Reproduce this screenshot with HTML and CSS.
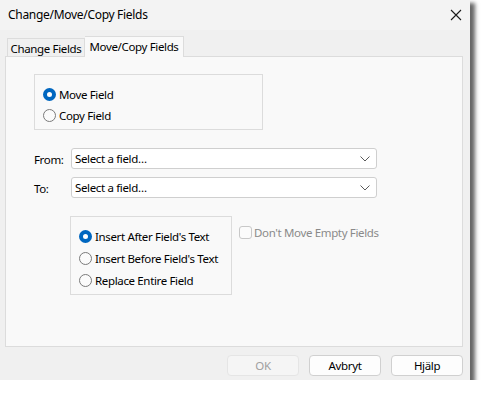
FILE: index.html
```html
<!DOCTYPE html>
<html>
<head>
<meta charset="utf-8">
<link rel="stylesheet" href="styles.css">
</head>
<body>
<div class="window">
  <div class="titlebar">
    <span class="title">Change/Move/Copy Fields</span>
    <svg class="close" width="12" height="12" viewBox="0 0 12 12"><path d="M1 1L11 11M11 1L1 11" stroke="#1a1a1a" stroke-width="1.1" fill="none"/></svg>
  </div>
  <div class="body">
    <div class="tabs">
      <div class="tab">Change Fields</div>
      <div class="tab active">Move/Copy Fields</div>
    </div>
    <div class="panel">
      <div class="group mode">
        <div class="opt"><span class="radio on"></span>Move Field</div>
        <div class="opt"><span class="radio"></span>Copy Field</div>
      </div>
      <div class="fields">
        <div class="row"><span class="lbl">From:</span><div class="select">Select a field…<svg class="chev" width="10" height="6" viewBox="0 0 10 6"><path d="M0.5 0.5L5 5L9.5 0.5" stroke="#5a5a5a" stroke-width="1" fill="none"/></svg></div></div>
        <div class="row"><span class="lbl">To:</span><div class="select">Select a field…<svg class="chev" width="10" height="6" viewBox="0 0 10 6"><path d="M0.5 0.5L5 5L9.5 0.5" stroke="#5a5a5a" stroke-width="1" fill="none"/></svg></div></div>
      </div>
      <div class="lower">
        <div class="group insert">
          <div class="opt"><span class="radio on"></span>Insert After Field's Text</div>
          <div class="opt"><span class="radio"></span>Insert Before Field's Text</div>
          <div class="opt"><span class="radio"></span>Replace Entire Field</div>
        </div>
        <div class="check"><span class="box"></span>Don't Move Empty Fields</div>
      </div>
    </div>
    <div class="footer">
      <div class="btn disabled">OK</div>
      <div class="btn">Avbryt</div>
      <div class="btn">Hjälp</div>
    </div>
  </div>
</div>
</body>
</html>
```

FILE: styles.css
```css
* { box-sizing: border-box; }
html, body { margin: 0; padding: 0; background: #ffffff; }
body {
  font-family: "Noto Sans", "Segoe UI", sans-serif;
  font-size: 11.5px;
  letter-spacing: -0.35px;
  color: #000;
  white-space: nowrap;
}
.window {
  width: 470px;
  height: 380px;
  background: #f0f0f0;
  box-shadow: 4px 4px 4px 1px rgba(0,0,0,0.6);
  display: flex;
  flex-direction: column;
}
.titlebar {
  height: 30px;
  background: #f3f3f3;
  display: flex;
  align-items: center;
  justify-content: space-between;
  padding: 0 8px 2px 8px;
}
.title { font-size: 12px; letter-spacing: -0.3px; }
.close { margin-top: 1px; }
.body {
  padding: 6px 7px 0 5px;
  display: flex;
  flex-direction: column;
}
.tabs {
  display: flex;
  align-items: flex-end;
  height: 21px;
  margin-left: 2px;
  margin-bottom: -1px;
}
.tab {
  height: 19px;
  border: 1px solid #dcdcdc;
  border-bottom: none;
  background: #f0f0f0;
  display: flex;
  align-items: center;
  width: 78px;
  justify-content: center;
  padding-top: 1px;
}
.tab.active {
  height: 21px;
  width: 99px;
  background: #f9f9f9;
  border-left: none;
  position: relative;
  z-index: 1;
  align-items: flex-start;
  padding-top: 2px;
}
.panel {
  width: 458px;
  height: 291px;
  border: 1px solid #dcdcdc;
  background: #f9f9f9;
  display: flex;
  flex-direction: column;
}
.group {
  border: 1px solid #dcdcdc;
  display: flex;
  flex-direction: column;
}
.mode {
  margin: 17px 0 0 28px;
  width: 229px;
  height: 56px;
  padding: 11px 0 0 8px;
  gap: 4px;
}
.opt {
  display: flex;
  align-items: center;
  height: 17px;
}
.radio {
  width: 13px;
  height: 13px;
  border-radius: 50%;
  border: 1px solid #7a7a7a;
  background: #fbfbfb;
  margin-right: 3px;
  flex: none;
}
.radio.on {
  border: 4px solid #0067c0;
  background: #ffffff;
}
.fields {
  margin: 18px 0 0 28px;
  display: flex;
  flex-direction: column;
  gap: 8px;
}
.row {
  display: flex;
  align-items: center;
}
.lbl {
  width: 37px;
  padding-top: 1px;
}
.select {
  width: 306px;
  height: 21px;
  background: #fff;
  border: 1px solid #cfcfcf;
  border-radius: 3px;
  display: flex;
  align-items: center;
  justify-content: space-between;
  padding: 0 6px 0 3px;
}
.chev { margin-top: 1px; }
.lower {
  margin: 18px 0 0 64px;
  display: flex;
  align-items: flex-start;
}
.insert {
  width: 162px;
  height: 79px;
  padding: 11px 0 0 8px;
  gap: 5px;
}
.check {
  margin: 9px 0 0 7px;
  display: flex;
  align-items: center;
  color: #8a8a8a;
}
.box {
  width: 13px;
  height: 13px;
  border: 1px solid #c8c8c8;
  border-radius: 3px;
  background: #fbfbfb;
  margin-right: 2px;
}
.footer {
  display: flex;
  justify-content: flex-end;
  gap: 10px;
  margin-top: 8px;
}
.btn {
  width: 72px;
  height: 21px;
  border: 1px solid #d0d0d0;
  border-radius: 4px;
  background: #fdfdfd;
  display: flex;
  align-items: center;
  justify-content: center;
}
.btn.disabled {
  color: #a0a0a0;
  border-color: #e5e5e5;
  background: #f5f5f5;
}
```
